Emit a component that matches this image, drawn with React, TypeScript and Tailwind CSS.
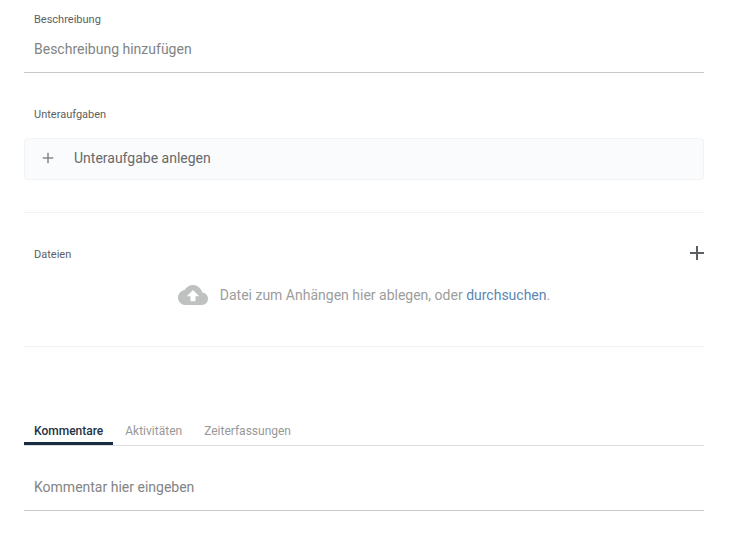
import { useState } from "react";
import { MdAdd, MdCloudUpload } from "react-icons/md";

const tabs = ["Kommentare", "Aktivitäten", "Zeiterfassungen"];

const labelClass = "block px-2.5 text-[11px] leading-4 text-[#5c5f61]";
const inputClass =
  "block h-[45px] w-full border-b border-[#c6c8c8] px-2.5 pb-0.5 text-sm text-[#3c4043] outline-none placeholder:text-[#828484]";

function Subtasks() {
  return (
    <section className="border-b border-[#f1f2f3] pt-[34px] pb-8">
      <h2 className={labelClass}>Unteraufgaben</h2>
      <button
        type="button"
        className="mt-[15px] flex h-[42px] w-full items-center rounded border border-[#f1f2f4] bg-[#fafbfd] px-3.5 pb-0.5 text-left text-sm text-[#68696a]"
      >
        <MdAdd size={18} className="mr-[17px] text-[#85888a]" />
        Unteraufgabe anlegen
      </button>
    </section>
  );
}

function Files() {
  return (
    <section className="border-b border-[#f1f2f3] pt-7 pb-9">
      <div className="flex h-6 items-end justify-between">
        <h2 className={`pb-0.5 ${labelClass}`}>Dateien</h2>
        <button type="button" aria-label="Datei hinzufügen" className="-mr-[5px] text-[#5c5f61]">
          <MdAdd size={24} />
        </button>
      </div>
      <div className="mt-[15px] flex items-center justify-center gap-3 text-sm text-[#9c9d9d]">
        <MdCloudUpload size={30} className="text-[#bec1c0]" />
        <p>
          Datei zum Anhängen hier ablegen, oder{" "}
          <a href="#" className="text-[#5c86b3]">
            durchsuchen
          </a>
          .
        </p>
      </div>
    </section>
  );
}

function Comments() {
  const [active, setActive] = useState("Kommentare");

  return (
    <section className="pt-[72px]">
      <div role="tablist" className="flex border-b border-[#dcdedf]">
        {tabs.map((tab) => (
          <button
            key={tab}
            type="button"
            role="tab"
            aria-selected={tab === active}
            onClick={() => setActive(tab)}
            className={
              tab === active
                ? "mr-0.5 h-[26px] border-b-3 border-[#172b41] px-2.5 text-xs font-medium text-[#233343]"
                : "mr-0.5 h-[26px] border-b-3 border-transparent px-2.5 text-xs text-[#979999]"
            }
          >
            {tab}
          </button>
        ))}
      </div>
      <input
        type="text"
        aria-label="Kommentar"
        placeholder="Kommentar hier eingeben"
        className={`mt-5 ${inputClass}`}
      />
    </section>
  );
}

export default function App() {
  return (
    <main className="min-h-screen bg-white pt-3 pr-7 pb-10 pl-6 font-['Roboto','Liberation_Sans',sans-serif]">
      <label htmlFor="description" className={labelClass}>
        Beschreibung
      </label>
      <input
        id="description"
        type="text"
        placeholder="Beschreibung hinzufügen"
        className={inputClass}
      />
      <Subtasks />
      <Files />
      <Comments />
    </main>
  );
}
